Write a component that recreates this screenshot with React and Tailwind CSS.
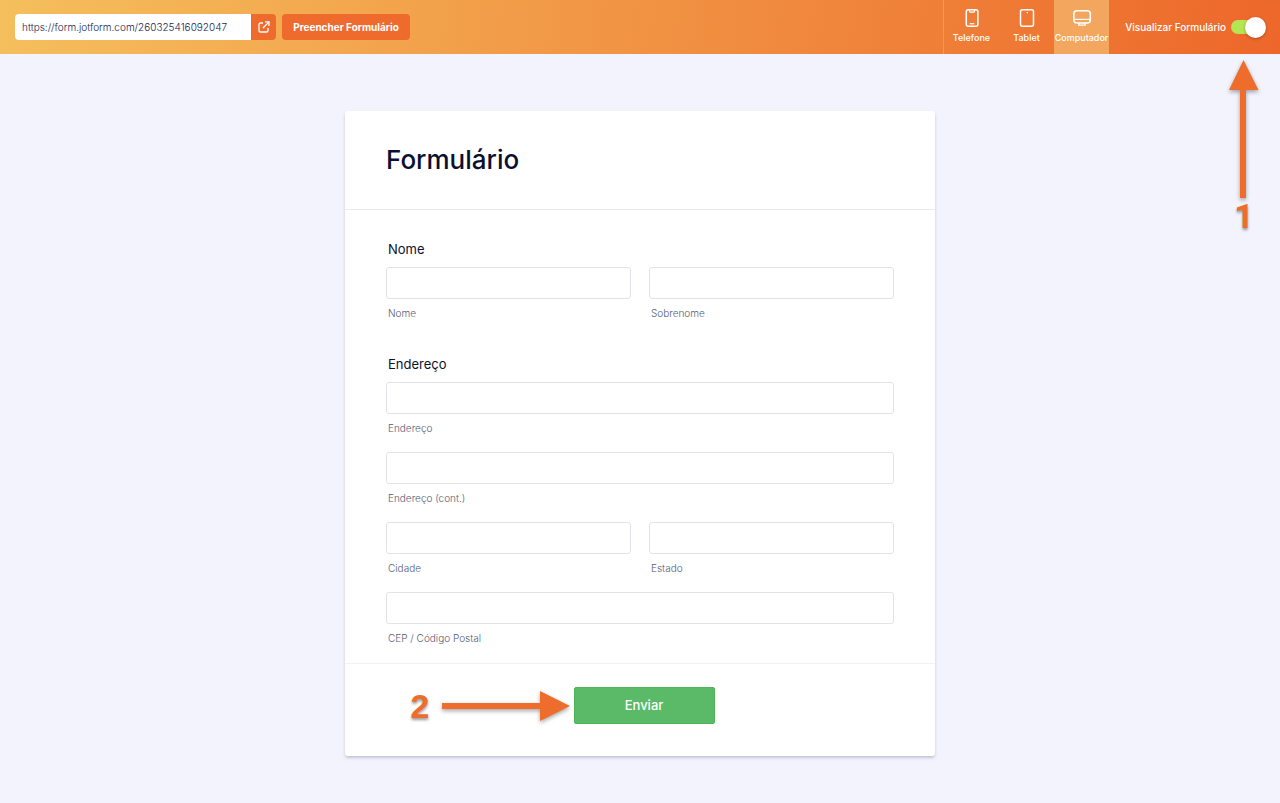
import React from "react";

function ExternalIcon() {
  return (
    <svg width="12" height="12" viewBox="0 0 12 12" fill="none" stroke="white" strokeWidth="1.3" aria-hidden="true">
      <path d="M5 2H2.6Q1 2 1 3.6V9.4Q1 11 2.6 11H8.4Q10 11 10 9.4V7" />
      <path d="M7 .9H11V5M10.8 1.1L5 7" />
    </svg>
  );
}

function PhoneIcon() {
  return (
    <svg width="20" height="20" viewBox="0 0 20 20" fill="none" stroke="white" strokeWidth="1.5" aria-hidden="true">
      <rect x="4.3" y="1.8" width="11.6" height="16.4" rx="2" />
      <path d="M7.2 2L8 4.2H12L12.8 2" strokeWidth="1.3" />
      <path d="M7.7 15.7H12.3" strokeWidth="1.2" />
    </svg>
  );
}

function TabletIcon() {
  return (
    <svg width="20" height="20" viewBox="0 0 20 20" fill="none" stroke="white" strokeWidth="1.5" aria-hidden="true">
      <rect x="3.5" y="1.8" width="13" height="16.4" rx="2" />
      <circle cx="10.3" cy="4.6" r=".8" fill="white" stroke="none" />
    </svg>
  );
}

function ComputerIcon() {
  return (
    <svg width="20" height="20" viewBox="0 0 20 20" fill="none" stroke="white" strokeWidth="1.5" aria-hidden="true">
      <rect x="1.9" y="2.7" width="16.4" height="12.2" rx="3" />
      <path d="M2 11.4H18" strokeWidth="1.2" />
      <path d="M7 15V16.6M13 15V16.6M6 17.1H14" strokeWidth="1.2" />
    </svg>
  );
}

const devices = [
  { name: "Telefone", Icon: PhoneIcon, active: false },
  { name: "Tablet", Icon: TabletIcon, active: false },
  { name: "Computador", Icon: ComputerIcon, active: true },
];

function TopBar() {
  return (
    <header className="flex h-[54px] items-stretch justify-between bg-[linear-gradient(98deg,#f5bf5c,#ed672a)] text-white">
      <div className="flex items-center gap-1.5 pl-[15px]">
        <div className="flex h-[26px] overflow-hidden rounded">
          <input
            aria-label="URL"
            readOnly
            value="https://form.jotform.com/260325416092047"
            className="w-[236px] bg-white px-[7px] text-[10px] font-light text-[#1c2350] outline-none"
          />
          <button aria-label="Abrir" className="flex w-[25px] items-center justify-center bg-[#ee6b2d]">
            <ExternalIcon />
          </button>
        </div>
        <button className="h-[26px] min-w-[128px] rounded bg-[#ee6b2d] px-2 text-[10px] font-bold whitespace-nowrap">
          Preencher Formulário
        </button>
      </div>
      <div className="flex">
        <nav className="flex border-l border-white/20">
          {devices.map(({ name, Icon, active }) => (
            <button
              key={name}
              aria-pressed={active}
              className={`flex w-[55px] flex-col items-center gap-1 pt-2 text-[9px] leading-3 font-medium ${active ? "bg-[#f3a65e]" : ""}`}
            >
              <Icon />
              {name}
            </button>
          ))}
        </nav>
        <label className="flex min-w-[171px] items-center justify-end gap-[5px] pr-3.5 pl-[15px] text-[10px] font-medium whitespace-nowrap">
          Visualizar Formulário
          <span className="relative flex h-[21px] w-[35px] items-center">
            <input type="checkbox" role="switch" defaultChecked className="h-3.5 w-[31px] appearance-none rounded-full bg-[#b4e552]" />
            <span className="pointer-events-none absolute top-0 right-0 size-[21px] rounded-full bg-white shadow-[0_1px_3px_rgba(80,30,0,0.4)]" />
          </span>
        </label>
      </div>
    </header>
  );
}

function Field({ id, label, wide }) {
  return (
    <div className={wide ? "col-span-2" : ""}>
      <input
        id={id}
        type="text"
        className="block h-8 w-full rounded-[3px] border border-[#e2e2e8] bg-white px-2 text-sm outline-none"
      />
      <label htmlFor={id} className="mt-2 block pl-0.5 text-[10px] leading-3 font-light text-[#555b73]">
        {label}
      </label>
    </div>
  );
}

function Group({ id, title, children }) {
  return (
    <section role="group" aria-labelledby={id}>
      <h2 id={id} className="pb-2.5 pl-0.5 text-[13px] leading-4 text-[#0a1030]">
        {title}
      </h2>
      <div className="grid grid-cols-2 gap-x-[18px] gap-y-[18px]">{children}</div>
    </section>
  );
}

const arrowShadow = "drop-shadow-[0_2px_2px_rgba(0,0,0,0.35)]";

export default function App() {
  return (
    <div className="relative min-h-screen bg-[#f3f3fe] pb-12 font-['Inter',sans-serif]">
      <TopBar />
      <div className="absolute top-[60px] right-5 flex flex-col items-center">
        <svg width="32" height="140" viewBox="0 0 32 140" className={arrowShadow} aria-hidden="true">
          <path d="M15.5 0L30.5 30H18V138H12V30H1Z" fill="#ee6c2c" />
        </svg>
        <span className="font-['Roboto',sans-serif] text-[34px] leading-8 font-bold text-[#ee6c2c] [text-shadow:0_2px_3px_rgba(0,0,0,0.4)]">
          1
        </span>
      </div>
      <main className="px-4 pt-[57px]">
        <form
          onSubmit={(e) => e.preventDefault()}
          className="mx-auto max-w-[590px] rounded-[3px] bg-white shadow-[0_2px_3px_rgba(60,60,110,0.25)]"
        >
          <div className="border-b border-[#e9e9ee] px-[41px] py-[33px]">
            <h1 className="text-[26px] leading-8 font-medium text-[#0a1030]">Formulário</h1>
          </div>
          <div className="flex flex-col gap-[37px] border-b border-[#f1f1f4] px-[41px] pt-[31px] pb-[19px]">
            <Group id="g-nome" title="Nome">
              <Field id="nome" label="Nome" />
              <Field id="sobrenome" label="Sobrenome" />
            </Group>
            <Group id="g-endereco" title="Endereço">
              <Field id="endereco" label="Endereço" wide />
              <Field id="endereco2" label="Endereço (cont.)" wide />
              <Field id="cidade" label="Cidade" />
              <Field id="estado" label="Estado" />
              <Field id="cep" label="CEP / Código Postal" wide />
            </Group>
          </div>
          <div className="flex justify-center pt-[23px] pb-8 pl-2">
            <div className="relative">
              <button className="h-[37px] w-[141px] rounded-[2px] border border-[#4fb457] bg-[#5aba67] text-[13px] font-medium text-white">
                Enviar
              </button>
              <div className="absolute top-0 right-full mr-1 flex h-[37px] items-center gap-3">
                <span className="font-['Liberation_Sans',sans-serif] text-[34px] leading-8 font-bold text-[#ee6c2c] [text-shadow:0_2px_3px_rgba(0,0,0,0.4)]">
                  2
                </span>
                <svg width="128" height="32" viewBox="0 0 128 32" className={arrowShadow} aria-hidden="true">
                  <path d="M128 16L98 31V19H0V13H98V1Z" fill="#ee6c2c" />
                </svg>
              </div>
            </div>
          </div>
        </form>
      </main>
    </div>
  );
}
